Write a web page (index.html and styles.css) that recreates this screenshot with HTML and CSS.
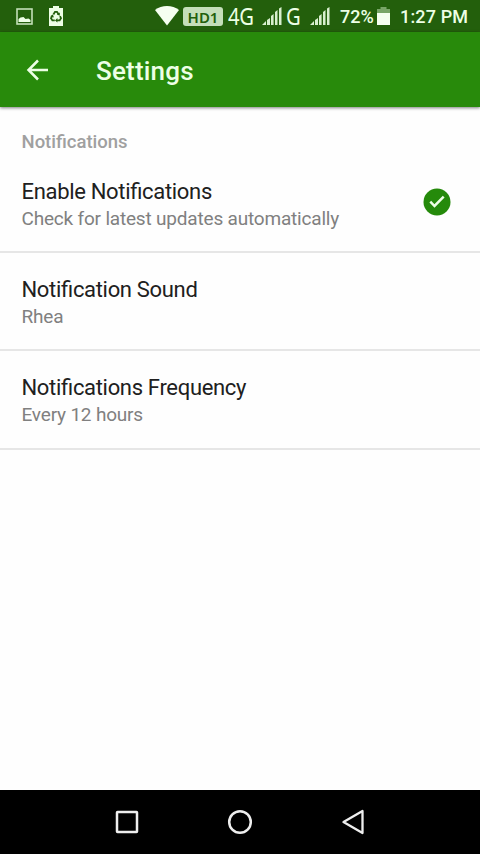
FILE: index.html
```html
<!DOCTYPE html>
<html lang="en">
<head>
<meta charset="utf-8">
<title>Settings</title>
<link rel="stylesheet" href="styles.css">
</head>
<body>
<header class="status-bar">
  <svg class="icon-picture" width="17" height="17" viewBox="0 0 17 17"><rect x="1" y="1" width="15" height="15" fill="none" stroke="#c4dfb8" stroke-width="1.6"/><path d="M2.500 14V11l2-1.500 3-.5 2 2 3-.5 2 1.500v2z" fill="#edffe5"/></svg>
  <svg class="icon-recycle" width="14" height="20" viewBox="0 0 14 20"><path d="M4 0h6v2h4v18H0V2h4z" fill="#edffe5"/><g fill="none" stroke="#235f0c" stroke-width="1.8"><path d="M4.400 8.500 6 5.800h2l1.700 2.700M11 10.200l1 2-1.400 2.200H8M5.800 14.400H3.400L2 12.200l1.300-2.300"/></g><path d="M10.800 6.500v3.200L7.900 8.500zM8.400 12v4.600L6 14.400zM1.200 10.300l2.700-1.700 1 3z" fill="#235f0c"/></svg>
  <svg class="icon-wifi" width="24" height="20" viewBox="0 0 24 20"><path d="M0 4C6.500-1.200 17.500-1.200 24 4L12 19.500z" fill="#f5fff0"/></svg>
  <span class="hd">HD1</span>
  <span class="network network-4g">4G</span>
  <svg class="signal" width="20" height="18" viewBox="0 0 20 18"><path d="M0 18l4-4v4zM5 13l3-2v7H5zM9 9l2.600-2v11H9zM13 5l2.500-2v15H13zM17 1.500 19.500 0v18H17z" fill="#d8efce"/></svg>
  <span class="network network-g">G</span>
  <svg class="signal" width="20" height="18" viewBox="0 0 20 18"><path d="M0 18l4-4v4zM5 13l3-2v7H5zM9 9l2.600-2v11H9zM13 5l2.500-2v15H13zM17 1.500 19.500 0v18H17z" fill="#d8efce"/></svg>
  <span class="percent">72%</span>
  <svg class="icon-battery" width="13" height="18" viewBox="0 0 13 18"><path d="M3.500 0h6v2H13v4H0V2h3.500z" fill="#79a568"/><path d="M0 6h13v12H0z" fill="#f5fff0"/></svg>
  <span class="clock">1:27 PM</span>
</header>
<div class="app-bar">
  <svg width="24" height="24" viewBox="0 0 24 24"><path d="M22 12H3M12 2.500 2.500 12l9.500 9.500" fill="none" stroke="#edffe5" stroke-width="2.500"/></svg>
  <h1>Settings</h1>
</div>
<main>
  <h2>Notifications</h2>
  <section class="row first">
    <div><div class="title">Enable Notifications</div><div class="sub">Check for latest updates automatically</div></div>
    <svg class="check" width="28" height="28" viewBox="0 0 28 28"><circle cx="14" cy="14" r="13.500" fill="#258a0b"/><path d="M7.300 13.700l4.200 4.300 9.200-9.300" fill="none" stroke="#edffe5" stroke-width="2.500"/></svg>
  </section>
  <section class="row">
    <div><div class="title">Notification Sound</div><div class="sub">Rhea</div></div>
  </section>
  <section class="row last">
    <div><div class="title">Notifications Frequency</div><div class="sub">Every 12 hours</div></div>
  </section>
</main>
<nav class="nav-bar">
  <svg width="24" height="26" viewBox="0 0 24 26"><rect x="2" y="3" width="20" height="20" rx=".5" fill="none" stroke="#eee" stroke-width="2.500"/></svg>
  <svg width="26" height="26" viewBox="0 0 26 26"><circle cx="13" cy="13" r="10.800" fill="none" stroke="#eee" stroke-width="2.500"/></svg>
  <svg width="24" height="26" viewBox="0 0 24 26"><path d="M21.500 2v22L2.500 13z" fill="none" stroke="#eee" stroke-width="2.300" stroke-linejoin="round"/></svg>
</nav>
</body>
</html>
```
FILE: styles.css
```css
* { box-sizing: border-box; }
body {
  margin: 0;
  height: 854px;
  display: flex;
  flex-direction: column;
  overflow: hidden;
  background: #fefefe;
  font-family: Roboto, sans-serif;
  white-space: nowrap;
}
svg { display: block; flex: none; }
.status-bar {
  height: 32px;
  flex: none;
  display: flex;
  align-items: center;
  padding-left: 16px;
  background: #235f0c;
  color: #edffe5;
}
.status-bar span { flex: none; }
.icon-recycle { margin-left: 16px; }
.icon-wifi { margin-left: 92px; }
.hd {
  width: 40px;
  height: 19px;
  margin-left: 4px;
  border-radius: 3px;
  background: #c5dfba;
  color: #235f0c;
  font: 600 15px/20px "Noto Sans", sans-serif;
  text-align: center;
}
.network {
  font: 23.500px/32px "Noto Sans", sans-serif;
  transform: scaleX(.86);
  transform-origin: left;
}
.network-4g { width: 34px; margin-left: 5px; letter-spacing: -.5px; }
.network-g { width: 24px; margin-left: 4px; }
.percent, .clock { font-size: 18px; line-height: 32px; font-weight: 500; padding-top: 2px; }
.percent { width: 37px; margin-left: 10px; }
.clock { margin-left: 10px; letter-spacing: .15px; }
.app-bar {
  position: relative;
  height: 75px;
  flex: none;
  display: flex;
  align-items: center;
  padding-left: 26px;
  background: #288a0b;
  box-shadow: 0 1px 3px rgba(0, 0, 0, .5);
}
.app-bar h1 {
  margin: 3px 0 0 46px;
  font-size: 26px;
  line-height: 32px;
  font-weight: 500;
  letter-spacing: .2px;
  color: #edffe5;
}
main { flex: 1; }
h2 {
  margin: 0;
  padding: 24px 0 0 21.500px;
  font-size: 18.500px;
  line-height: 22px;
  font-weight: 500;
  color: #a0a0a0;
}
.row {
  height: 98px;
  display: flex;
  justify-content: space-between;
  padding: 23px 29px 0 21.500px;
  border-bottom: 2px solid #e6e6e6;
}
.row.first { height: 100px; padding-top: 25px; }
.row.last { height: 99px; }
.title {
  font-size: 22px;
  line-height: 28px;
  letter-spacing: -.32px;
  font-feature-settings: "liga" 1;
  color: #202020;
}
.sub { font-size: 19px; line-height: 26px; letter-spacing: -.19px; color: #808080; }
.check { margin-top: 10px; }
.nav-bar {
  height: 64px;
  flex: none;
  display: flex;
  align-items: center;
  padding-left: 115px;
  background: #000;
}
.nav-bar svg + svg { margin-left: 88px; }
```
